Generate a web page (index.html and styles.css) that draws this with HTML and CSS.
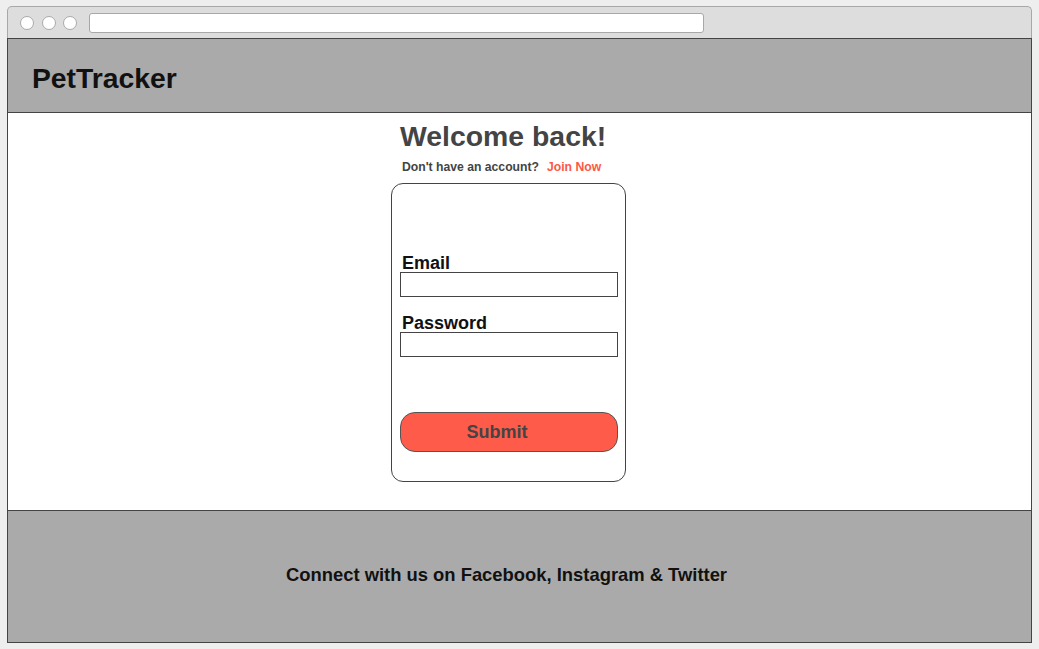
FILE: index.html
```html
<!DOCTYPE html>
<html lang="en">
<head>
<meta charset="utf-8">
<title>PetTracker - Login</title>
<link rel="stylesheet" href="styles.css">
</head>
<body>
<div class="window">
  <div class="chrome">
    <span class="dot"></span>
    <span class="dot"></span>
    <span class="dot"></span>
    <span class="address"></span>
  </div>
  <header class="site-header">
    <h1 class="logo">PetTracker</h1>
  </header>
  <main class="main">
    <div class="column">
      <h2 class="title">Welcome back!</h2>
      <p class="subtitle">Don't have an account?<a class="join" href="#">Join Now</a></p>
      <form class="card">
        <label class="label" for="email">Email</label>
        <input class="field" id="email" type="text">
        <label class="label label-gap" for="password">Password</label>
        <input class="field" id="password" type="password">
        <button class="submit" type="button">Submit</button>
      </form>
    </div>
  </main>
  <footer class="site-footer">
    <p class="footer-text">Connect with us on Facebook, Instagram &amp; Twitter</p>
  </footer>
</div>
</body>
</html>
```
FILE: styles.css
```css
* { box-sizing: border-box; }

html, body {
  margin: 0;
  padding: 0;
  background: #eeeeee;
  font-family: "Liberation Sans", Arial, sans-serif;
}

.window {
  margin: 6px 0 0 7px;
  width: 1025px;
}

.chrome {
  height: 32px;
  background: #dddddd;
  border: 1px solid #a8a8a8;
  border-bottom: none;
  border-radius: 5px 5px 0 0;
  display: flex;
  align-items: center;
  padding: 0 0 0 12px;
}

.dot {
  width: 14px;
  height: 14px;
  border-radius: 50%;
  background: #ffffff;
  border: 1px solid #aaaaaa;
  flex: none;
}

.dot + .dot { margin-left: 7.5px; }

.address {
  margin-left: 12px;
  width: 615px;
  height: 20px;
  background: #ffffff;
  border: 1px solid #a8a8a8;
  border-radius: 3px;
}

.site-header {
  background: #aaaaaa;
  border: 1px solid #444444;
  padding: 23px 24px 18px;
}

.logo {
  margin: 0;
  font-size: 28.3px;
  line-height: 32px;
  font-weight: bold;
  color: #111111;
}

.main {
  background: #ffffff;
  border-left: 1px solid #444444;
  border-right: 1px solid #444444;
  height: 397px;
  padding: 7px 0 0 383px;
}

.column {
  width: 235px;
  display: flex;
  flex-direction: column;
}

.title {
  margin: 0;
  padding-left: 9px;
  font-size: 28.4px;
  line-height: 32px;
  font-weight: bold;
  color: #444444;
  white-space: nowrap;
}

.subtitle {
  margin: 7px 0 0;
  padding-left: 11px;
  font-size: 12.2px;
  line-height: 16px;
  font-weight: bold;
  color: #444444;
  white-space: nowrap;
}

.join {
  margin-left: 8px;
  color: #fd5846;
  text-decoration: none;
}

.card {
  margin: 8px 0 0;
  width: 235px;
  border: 1px solid #444444;
  border-radius: 12px;
  padding: 70px 7px 29px 8px;
  display: flex;
  flex-direction: column;
}

.label {
  display: block;
  padding-left: 2px;
  font-size: 18px;
  line-height: 18px;
  font-weight: bold;
  color: #111111;
}

.label-gap { margin-top: 17px; }

.field {
  display: block;
  width: 218px;
  height: 25px;
  margin: 0;
  padding: 0 4px;
  border: 1px solid #444444;
  border-radius: 0;
  background: #ffffff;
  font: inherit;
  outline: none;
}

.submit {
  margin-top: 55px;
  width: 218px;
  height: 40px;
  border: 1px solid #555555;
  border-radius: 15px;
  background: #ff5b4b;
  color: #444444;
  font-family: "Liberation Sans", Arial, sans-serif;
  font-size: 18px;
  line-height: 20px;
  font-weight: bold;
  padding: 0 24px 0 0;
  display: flex;
  align-items: center;
  justify-content: center;
}

.site-footer {
  background: #aaaaaa;
  border: 1px solid #444444;
  height: 133px;
  padding: 53px 26px 0 0;
}

.footer-text {
  margin: 0;
  text-align: center;
  font-size: 18.4px;
  line-height: 22px;
  font-weight: bold;
  color: #111111;
}
```
